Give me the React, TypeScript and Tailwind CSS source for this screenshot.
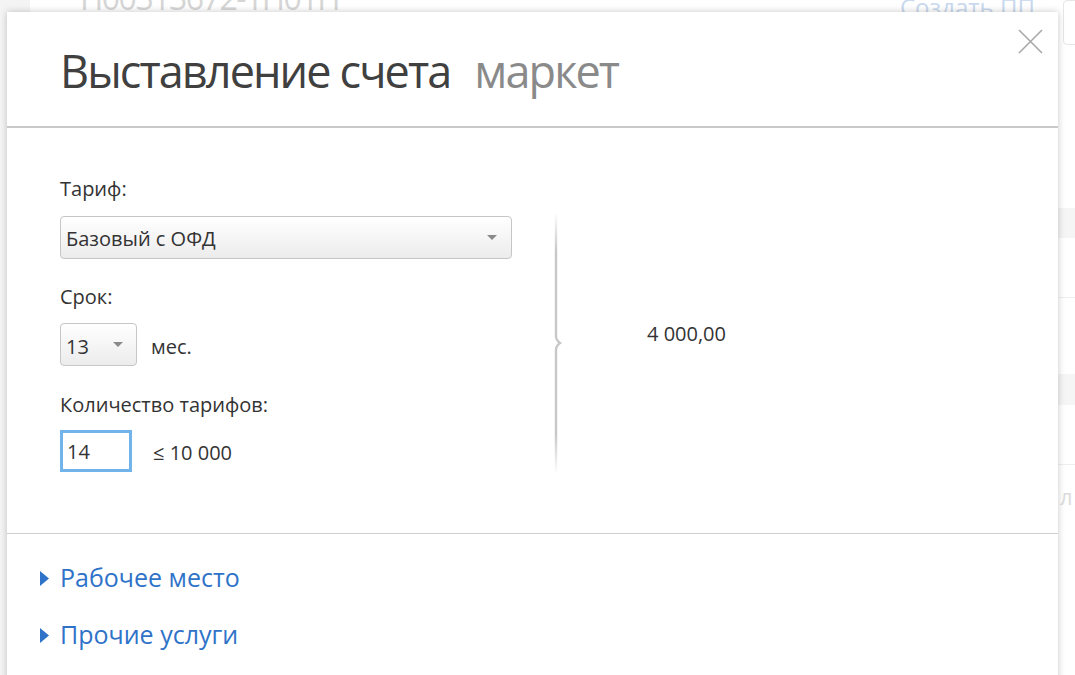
import React from "react";

const font = { fontFamily: '"Open Sans", "Noto Sans", sans-serif' };

function Caret() {
  return (
    <svg width="10" height="6" viewBox="0 0 10 6" className="shrink-0">
      <path d="M0 0 L10 0 L5 5 Z" fill="#8a8a8a" />
    </svg>
  );
}

function Tri() {
  return (
    <svg width="9" height="15" viewBox="0 0 9 15" className="shrink-0">
      <path d="M0 0 L9 7.5 L0 15 Z" fill="#2f73c9" />
    </svg>
  );
}

export default function App() {
  return (
    <div className="relative w-[1075px] h-[675px] overflow-hidden bg-white" style={font}>
      {/* faded page behind */}
      <div className="absolute inset-0 flex">
        <div className="w-[30px] h-full bg-[#f4f4f4]" />
        <div className="flex-1 relative">
          <div className="absolute left-[50px] top-[-26px] text-[32px] text-[#d6d6d6] tracking-[-1.5px] whitespace-nowrap">П00313672-1П01П</div>
          <div className="absolute left-[870px] top-[-11px] text-[24px] text-[#c9d9ef] whitespace-nowrap">Создать ПП</div>
          <div className="absolute left-[1033px] top-[0px] w-[20px] h-[45px] border border-[#e6e6e6] rounded-[4px]" />
          <div className="absolute left-[1000px] top-[208px] w-[60px] h-[30px] bg-[#f5f5f5]" />
          <div className="absolute left-[1000px] top-[297px] w-[60px] h-[1px] bg-[#efefef]" />
          <div className="absolute left-[1000px] top-[374px] w-[60px] h-[31px] bg-[#f5f5f5]" />
          <div className="absolute left-[1000px] top-[464px] w-[60px] h-[1px] bg-[#efefef]" />
          <div className="absolute left-[1030px] top-[480px] text-[22px] text-[#dcdcdc]">л</div>
        </div>
      </div>

      {/* modal */}
      <div className="absolute left-[7px] top-[12px] w-[1051px] h-[700px] bg-white shadow-[0_0_7px_rgba(0,0,0,0.22)] flex flex-col">
        <div className="relative h-[114px] flex items-start pl-[53px] pt-[29px]">
          <span className="text-[45px] leading-[60px] text-[#404040] tracking-[-1.9px]">Выставление счета</span>
          <span className="ml-[24px] text-[45px] leading-[60px] text-[#8a8a8a] tracking-[-1.9px]">маркет</span>
          <svg className="absolute left-[1011px] top-[17px]" width="25" height="25" viewBox="0 0 25 25">
            <path d="M1 1 L24 24 M24 1 L1 24" stroke="#a8a8a8" strokeWidth="1.6" />
          </svg>
        </div>
        <div className="h-[2px] bg-[#c9c9c9]" />

        <div className="h-[405px] flex pl-[53px]">
          <div className="w-[452px] flex flex-col pt-[49px] text-[#333] text-[20px]">
            <div className="leading-[24px]">Тариф:</div>
            <div className="mt-[15px] h-[43px] rounded-[4px] border border-[#c6c6c6] bg-gradient-to-b from-white to-[#ececec] flex items-center pl-[5px] pr-[14px] justify-between">
              <span className="mt-[2px]">Базовый с ОФД</span>
              <Caret />
            </div>
            <div className="mt-[26px] leading-[24px]">Срок:</div>
            <div className="mt-[14px] flex items-center">
              <div className="w-[77px] h-[43px] rounded-[4px] border border-[#c6c6c6] bg-gradient-to-b from-white to-[#ececec] flex items-center pl-[5px] pr-[13px] justify-between">
                <span className="mt-[4px]">13</span>
                <Caret />
              </div>
              <span className="ml-[14px] mt-[5px]">мес.</span>
            </div>
            <div className="mt-[27px] leading-[24px]">Количество тарифов:</div>
            <div className="mt-[13px] flex items-center">
              <div className="w-[72px] h-[42px] border-[3px] border-[#71b4ec] flex items-center pl-[4px]"><span className="mt-[2px]">14</span></div>
              <span className="ml-[21px] mt-[4px]">≤ 10 000</span>
            </div>
          </div>
          <div className="ml-[41px] pt-[84px]">
            <svg width="14" height="262" viewBox="0 0 14 262">
              <defs>
                <linearGradient id="g" x1="0" y1="0" x2="0" y2="1">
                  <stop offset="0" stopColor="#c8c8c8" stopOpacity="0" />
                  <stop offset="0.15" stopColor="#c8c8c8" />
                  <stop offset="0.85" stopColor="#c8c8c8" />
                  <stop offset="1" stopColor="#c8c8c8" stopOpacity="0" />
                </linearGradient>
              </defs>
              <path d="M3 0 L3 124 Q3 128 7 131 Q3 134 3 138 L3 262" stroke="url(#g)" strokeWidth="2.4" fill="none" />
            </svg>
          </div>
          <div className="ml-[80px] pt-[194px] text-[20px] text-[#333] leading-[24px]">4 000,00</div>
        </div>
        <div className="h-[1px] bg-[#cfcfcf]" />

        <div className="flex flex-col pt-[28px] text-[#2f73c9] text-[25px]">
          <div className="flex items-center h-[32px]">
            <div className="ml-[33px] w-[20px]"><Tri /></div>
            <span>Рабочее место</span>
          </div>
          <div className="flex items-center h-[32px] mt-[25px]">
            <div className="ml-[33px] w-[20px]"><Tri /></div>
            <span>Прочие услуги</span>
          </div>
        </div>
      </div>
    </div>
  );
}
